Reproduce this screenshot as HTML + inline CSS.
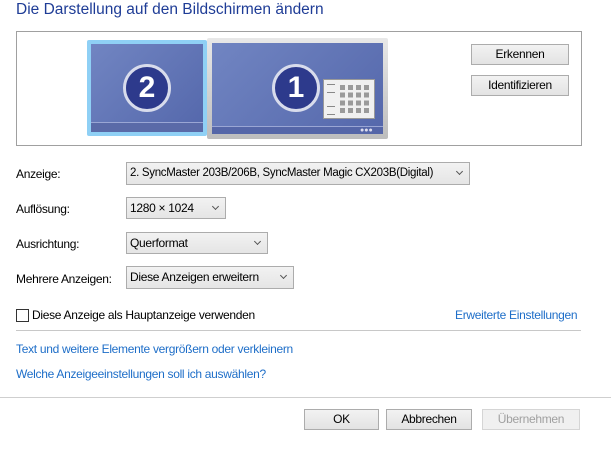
<!DOCTYPE html>
<html><head><meta charset="utf-8"><style>
body{margin:0;width:611px;height:449px;background:#fff;font-family:"Liberation Sans",sans-serif;font-size:12px;color:#000;position:relative;overflow:hidden}
.a{position:absolute;white-space:nowrap}
.s{letter-spacing:-0.3px}
.title{left:16px;top:1px;font-size:15.5px;color:#1e3c96;white-space:nowrap}
.box{left:16px;top:31px;width:564px;height:113px;border:1px solid #a0a0a0}
.btn{position:absolute;background:linear-gradient(#f2f2f2,#e3e3e3);border:1px solid #acacac;text-align:center;box-sizing:border-box;line-height:19px;font-size:12px;letter-spacing:-0.3px}
.dd{position:absolute;background:linear-gradient(#f2f2f2,#e5e5e5);border:1px solid #acacac;box-sizing:border-box;padding-left:3px;line-height:20px;font-size:12px;white-space:nowrap;letter-spacing:-0.3px}
.dd:after{content:"";position:absolute;right:7px;top:6px;width:4px;height:4px;border-right:1.5px solid #555;border-bottom:1.5px solid #555;transform:rotate(45deg)}
.lbl{position:absolute;left:16px;font-size:12px;letter-spacing:-0.3px}
.link{position:absolute;color:#1e6ec8;font-size:12px;white-space:nowrap;letter-spacing:-0.3px}
.mon{position:absolute;background:linear-gradient(135deg,#7185c2,#5467ab);}
.circ{position:absolute;border-radius:50%;background:#2d3a8c;border:3px solid #d8dcec;color:#fff;font-weight:bold;font-size:30px;text-align:center;box-sizing:border-box}
</style></head><body>
<div class="a title">Die Darstellung auf den Bildschirmen ändern</div>
<div class="a box"></div>
<div class="a" style="left:87px;top:40px;width:120px;height:96px;background:#8fd0f5;border-radius:2px"></div>
<div class="mon" style="left:91px;top:44px;width:112px;height:88px"></div>
<div class="a" style="left:91px;top:122px;width:112px;height:1px;background:#9aa6d4"></div>
<div class="a" style="left:91px;top:123px;width:112px;height:9px;background:#5a6aa8"></div>
<div class="circ" style="left:123px;top:64px;width:48px;height:48px;line-height:42px">2</div>
<div class="a" style="left:207px;top:38px;width:181px;height:101px;background:linear-gradient(#e8e8e8,#bdbdbd);border-radius:2px"></div>
<div class="mon" style="left:212px;top:43px;width:171px;height:91px"></div>
<div class="a" style="left:212px;top:126px;width:171px;height:1px;background:#9aa6d4"></div>
<div class="a" style="left:212px;top:127px;width:171px;height:7px;background:#5566a8"></div>
<div class="a" style="left:360px;top:129px;width:20px;height:4px;color:#dde;font-size:7px;line-height:4px">●●●</div>
<div class="circ" style="left:272px;top:64px;width:48px;height:48px;line-height:42px">1</div>
<div class="a" style="left:323px;top:79px;width:50px;height:38px;background:#f0f0f0;border:1px solid #999"></div>
<div class="a" style="left:327px;top:84px;width:8px;height:7px;border-top:1px solid #888;border-bottom:1px solid #888"></div>
<div class="a" style="left:327px;top:106px;width:8px;height:7px;border-top:1px solid #888;border-bottom:1px solid #888"></div>
<div class="a" style="left:340px;top:85px;width:29px;height:28px;background:repeating-linear-gradient(90deg,#9a9a9a 0 5px,transparent 5px 8px);-webkit-mask:repeating-linear-gradient(#000 0 5px,transparent 5px 7.7px);mask:repeating-linear-gradient(#000 0 5px,transparent 5px 7.7px)"></div>
<div class="btn" style="left:471px;top:44px;width:98px;height:21px">Erkennen</div>
<div class="btn" style="left:471px;top:75px;width:98px;height:21px">Identifizieren</div>

<div class="lbl" style="top:167px">Anzeige:</div>
<div class="dd" style="left:126px;top:162px;width:344px;height:23px;font-size:11.5px">2. SyncMaster 203B/206B, SyncMaster Magic CX203B(Digital)</div>
<div class="lbl" style="top:202px">Auflösung:</div>
<div class="dd" style="left:126px;top:197px;width:100px;height:22px">1280 × 1024</div>
<div class="lbl" style="top:237px">Ausrichtung:</div>
<div class="dd" style="left:126px;top:232px;width:142px;height:22px">Querformat</div>
<div class="lbl" style="top:272px">Mehrere Anzeigen:</div>
<div class="dd" style="left:126px;top:266px;width:168px;height:23px">Diese Anzeigen erweitern</div>

<div class="a" style="left:16px;top:309px;width:11px;height:11px;border:1px solid #333;background:#fff"></div>
<div class="a s" style="left:32px;top:308px">Diese Anzeige als Hauptanzeige verwenden</div>
<div class="link" style="left:455px;top:308px">Erweiterte Einstellungen</div>
<div class="a" style="left:16px;top:330px;width:565px;height:1px;background:#c8c8c8"></div>
<div class="link" style="left:16px;top:342px">Text und weitere Elemente vergrößern oder verkleinern</div>
<div class="link" style="left:16px;top:367px">Welche Anzeigeeinstellungen soll ich auswählen?</div>
<div class="a" style="left:0;top:397px;width:611px;height:1px;background:#cfcfcf"></div>
<div class="btn" style="left:304px;top:409px;width:75px;height:21px">OK</div>
<div class="btn" style="left:386px;top:409px;width:86px;height:21px">Abbrechen</div>
<div class="btn" style="left:482px;top:409px;width:98px;height:21px;background:#f0f0f0;border-color:#d5d5d5;color:#a0a0a0">Übernehmen</div>
</body></html>
